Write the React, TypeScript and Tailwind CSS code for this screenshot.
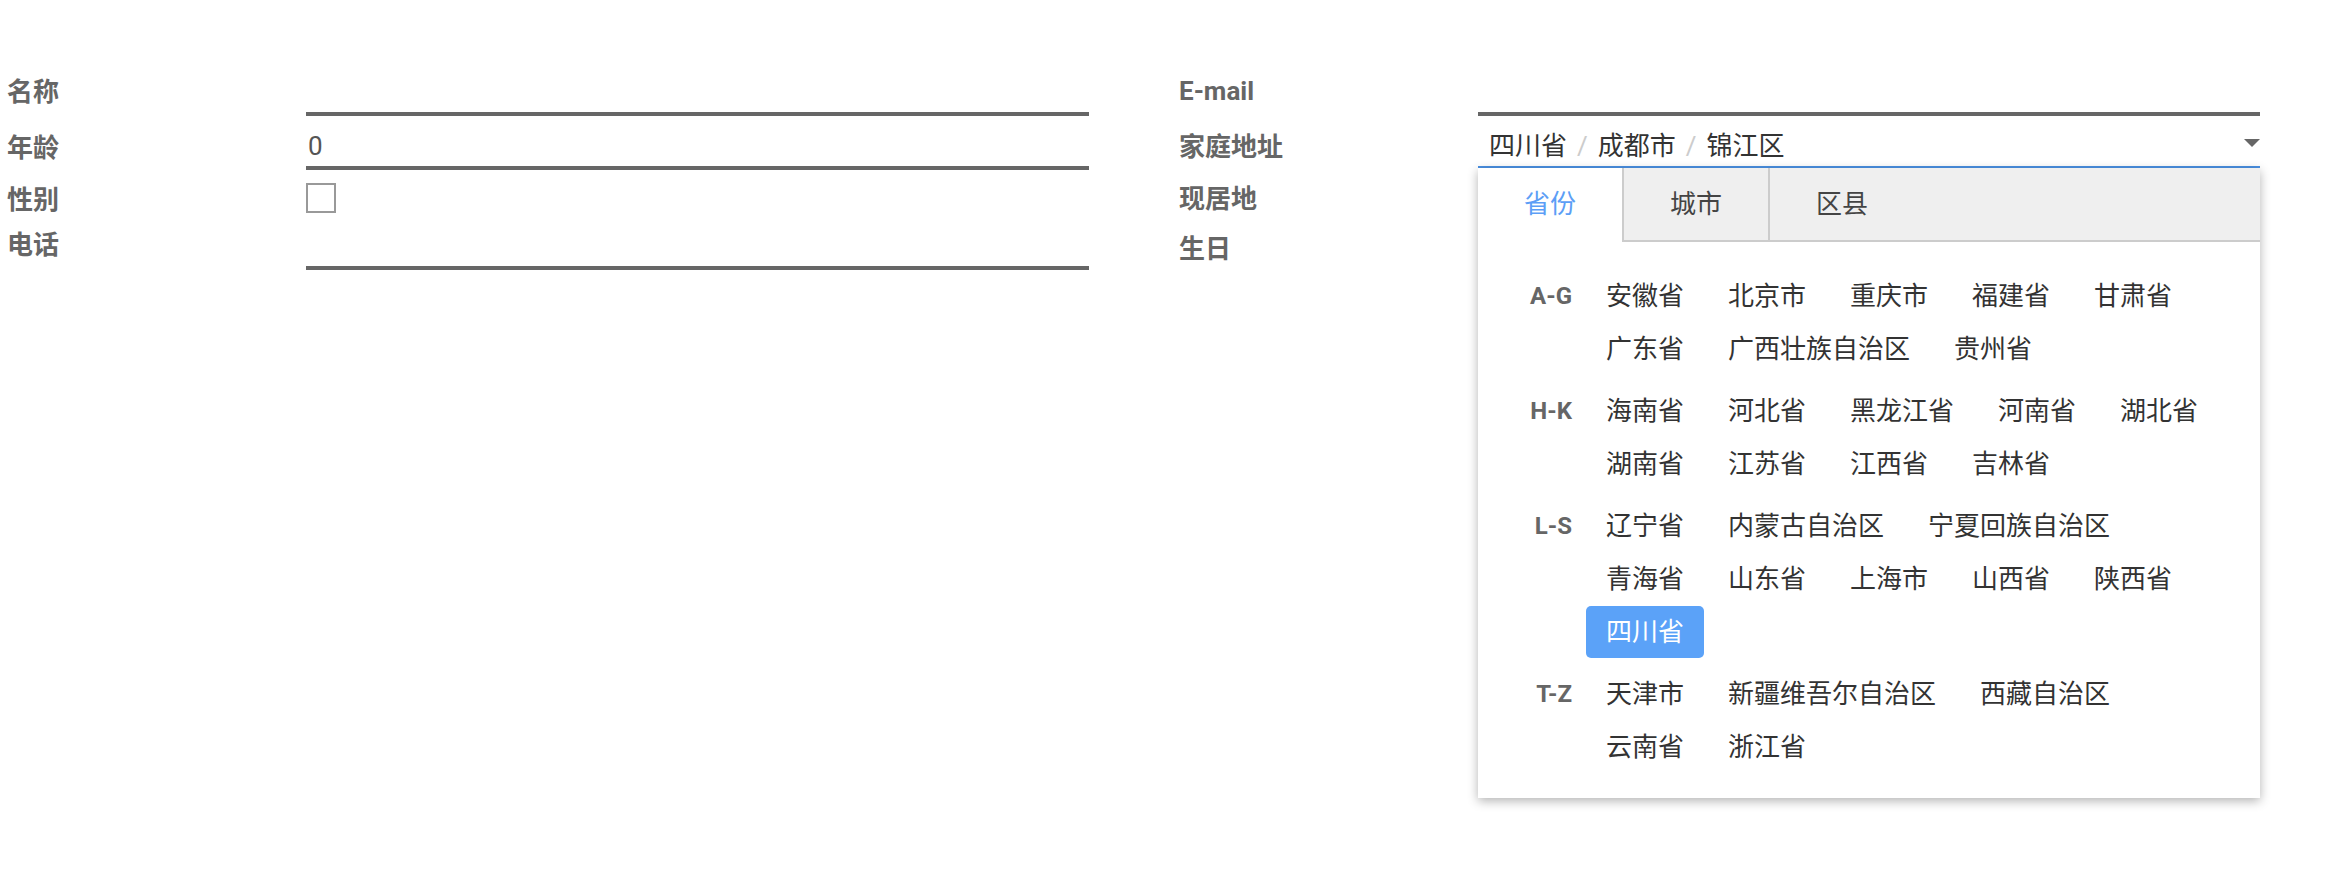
import React from 'react';

const groups: { label: string; items: string[] }[] = [
  { label: 'A-G', items: ['安徽省', '北京市', '重庆市', '福建省', '甘肃省', '广东省', '广西壮族自治区', '贵州省'] },
  { label: 'H-K', items: ['海南省', '河北省', '黑龙江省', '河南省', '湖北省', '湖南省', '江苏省', '江西省', '吉林省'] },
  { label: 'L-S', items: ['辽宁省', '内蒙古自治区', '宁夏回族自治区', '青海省', '山东省', '上海市', '山西省', '陕西省', '四川省'] },
  { label: 'T-Z', items: ['天津市', '新疆维吾尔自治区', '西藏自治区', '云南省', '浙江省'] },
];

const selected = '四川省';

function Label({ children, className = '' }: { children: React.ReactNode; className?: string }) {
  return <div className={'w-[299px] shrink-0 text-[26px] leading-none font-bold text-[#666] ' + className}>{children}</div>;
}

function RegionPanel() {
  return (
    <div className="absolute left-0 top-full z-10 w-[782px] bg-white shadow-[0_3px_10px_rgba(0,0,0,0.3)]">
      {/* tabs */}
      <div className="flex h-[74px] text-[26px]">
        <div className="flex items-center bg-white px-[46px] pb-[2px] text-[#5c9ef6]">省份</div>
        <div className="flex items-center border-b-2 border-l-2 border-[#cccccc] bg-[#efefef] px-[46px] text-[#444]">城市</div>
        <div className="flex flex-1 items-center border-b-2 border-l-2 border-[#cccccc] bg-[#efefef] px-[46px] text-[#444]">区县</div>
      </div>

      <div className="pt-[28px] pb-[25px]">
        {groups.map((g) => (
          <div key={g.label} className="mb-[10px] flex items-start last:mb-0">
            <div className="w-[94px] shrink-0 text-right text-[24px] leading-[52px] font-bold text-[#666]">{g.label}</div>
            <div className="ml-[14px] flex w-[640px] flex-wrap gap-x-[4px] gap-y-[1px]">
              {g.items.map((it) => (
                <div
                  key={it}
                  className={
                    it === selected
                      ? 'h-[52px] rounded-[5px] bg-[#5ba2f8] px-5 text-[26px] leading-[52px] text-white'
                      : 'h-[52px] rounded-[5px] px-5 text-[26px] leading-[52px] text-[#333]'
                  }
                >
                  {it}
                </div>
              ))}
            </div>
          </div>
        ))}
      </div>
    </div>
  );
}

export default function App() {
  return (
    <div className="min-h-[870px] w-full bg-white pt-[66px] font-['Roboto','Noto_Sans_CJK_SC',sans-serif]">
      <div className="grid grid-cols-[1172px_1fr]">
        {/* left column */}
        <div className="flex flex-col pl-[7px]">
          <div className="flex h-[50px] items-center">
            <Label className="translate-y-[1px]">名称</Label>
            <div className="h-full w-[783px] border-b-4 border-[#666]" />
          </div>
          <div className="mt-[4px] flex h-[50px] items-center">
            <Label className="translate-y-[3px]">年龄</Label>
            <div className="flex h-full w-[783px] items-center border-b-4 border-[#666] pl-[2px] pt-[6px] text-[26px] text-[#555]">0</div>
          </div>
          <div className="mt-[4px] flex h-[46px] items-center">
            <Label className="translate-y-[3px]">性别</Label>
            <div className="mt-[2px] h-[30px] w-[30px] border-2 border-[#999] bg-white" />
          </div>
          <div className="flex h-[50px] items-center">
            <Label>电话</Label>
            <div className="h-full w-[783px] border-b-4 border-[#666]" />
          </div>
        </div>

        {/* right column */}
        <div className="flex flex-col pl-[7px]">
          <div className="flex h-[50px] items-center">
            <Label>E-mail</Label>
            <div className="h-full w-[782px] border-b-4 border-[#666]" />
          </div>
          <div className="mt-[4px] flex h-[48px] items-center">
            <Label className="translate-y-[3px]">家庭地址</Label>
            <div className="relative h-full w-[782px]">
              <div className="flex h-full items-center justify-between border-b-2 border-[#4a90e2] pl-[11px] pt-[6px]">
                <div className="flex items-center text-[26px] text-[#333]">
                  <span>四川省</span>
                  <span className="mx-[10px] text-[#ccc]">/</span>
                  <span>成都市</span>
                  <span className="mx-[10px] text-[#ccc]">/</span>
                  <span>锦江区</span>
                </div>
                <svg width="16" height="8" viewBox="0 0 16 8" className="mb-[6px]">
                  <polygon points="0,0 16,0 8,8" fill="#666" />
                </svg>
              </div>
              <RegionPanel />
            </div>
          </div>
          <div className="mt-[4px] flex h-[48px] items-center">
            <Label className="translate-y-[3px]">现居地</Label>
          </div>
          <div className="mt-[4px] flex h-[50px] items-center">
            <Label>生日</Label>
          </div>
        </div>
      </div>
    </div>
  );
}
